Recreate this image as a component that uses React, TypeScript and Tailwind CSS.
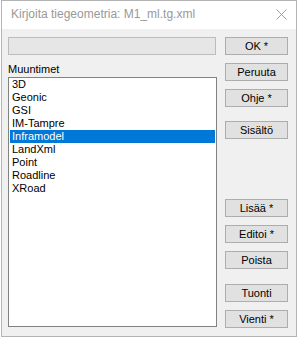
const items = ['3D', 'Geonic', 'GSI', 'IM-Tampre', 'Inframodel', 'LandXml', 'Point', 'Roadline', 'XRoad']

function WinButton({ label, className }: { label: string; className?: string }) {
  return (
    <button
      type="button"
      className={`h-[18px] w-[63px] border border-[#adadad] bg-[#e1e1e1] text-[11px] leading-[16px] text-black ${className ?? ''}`}
    >
      {label}
    </button>
  )
}

export default function App() {
  return (
    <div className="h-[338px] w-[300px] bg-white font-['Liberation_Sans',Arial,sans-serif]">
      <div className="ml-px flex h-[337px] w-[296px] flex-col border border-[#b4b4b4] bg-[#f0f0f0]">
        <div className="flex h-[28px] items-center justify-between bg-white pb-[2px] pl-[9px] pr-[9px]">
          <span className="text-[12px] text-[#999999]">Kirjoita tiegeometria: M1_ml.tg.xml</span>
          <svg width="11" height="11" viewBox="0 0 11 11">
            <path d="M0.5 0.5 L10.5 10.5 M10.5 0.5 L0.5 10.5" stroke="#a0a0a0" strokeWidth="1" fill="none" />
          </svg>
        </div>
        <div className="flex gap-[8px] pl-[6px] pt-[8px]">
          <div className="flex w-[209px] flex-col">
            <div className="h-[18px] w-[208px] border border-[#bcbcbc] bg-[#e6e6e6]" />
            <div className="mt-[8px] h-[13px] text-[11px] leading-[13px] text-black">Muuntimet</div>
            <div className="mt-[1px] h-[250px] w-[209px] border border-[#828282] bg-white px-px">
              {items.map((it) => (
                <div
                  key={it}
                  className={`h-[13px] pl-[2px] text-[11px] leading-[13px] ${
                    it === 'Inframodel' ? 'bg-[#0078d7] text-white' : 'text-black'
                  }`}
                >
                  {it}
                </div>
              ))}
            </div>
          </div>
          <div className="flex flex-col">
            <WinButton label="OK *" />
            <WinButton label="Peruuta" className="mt-[8px]" />
            <WinButton label="Ohje *" className="mt-[8px]" />
            <WinButton label="Sisältö" className="mt-[14px]" />
            <WinButton label="Lisää *" className="mt-[60px]" />
            <WinButton label="Editoi *" className="mt-[8px]" />
            <WinButton label="Poista" className="mt-[8px]" />
            <WinButton label="Tuonti" className="mt-[15px]" />
            <WinButton label="Vienti *" className="mt-[8px]" />
          </div>
        </div>
      </div>
    </div>
  )
}
